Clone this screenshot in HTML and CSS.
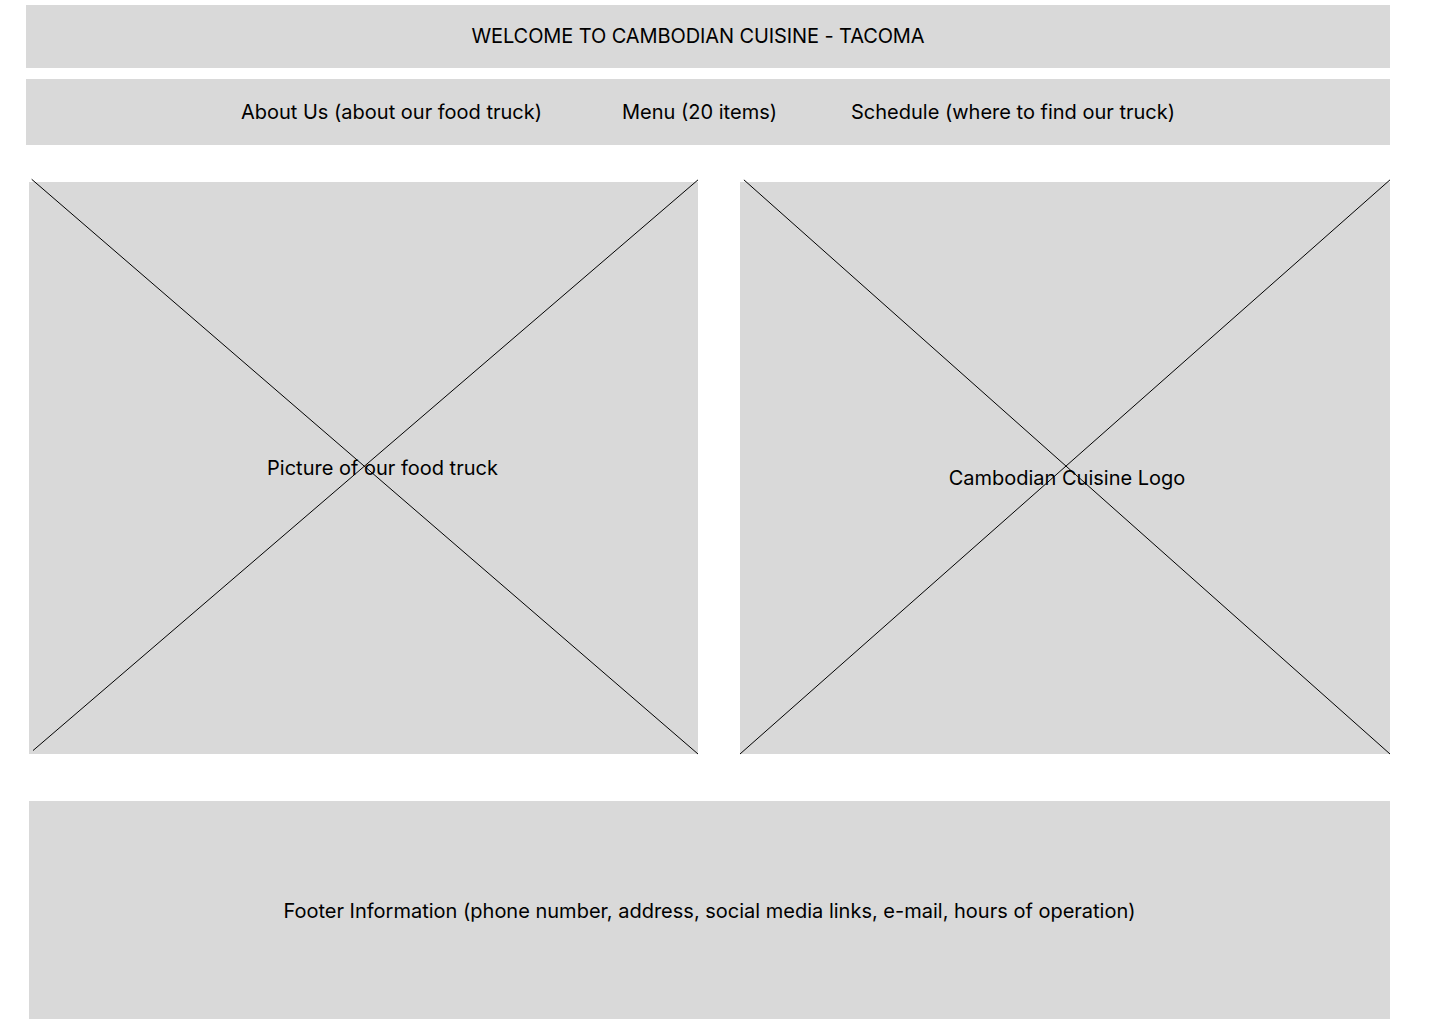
FILE: index.html
```html
<!DOCTYPE html>
<html>
<head>
  <meta charset=utf-8>
  <meta name="viewport" content="width=device-width, initial-scale=1">
  <title>Cambodian Cuisine - Tacoma</title>
<link rel="stylesheet" href="styles.css">
</head>
<body>

<div class=page>
  <header class=welcome>WELCOME TO CAMBODIAN CUISINE - TACOMA</header>

  <nav class=navBar>
    <a class=navItem>About Us (about our food truck)</a>
    <a class='navItem menuItem'>Menu (20 items)</a>
    <a class=navItem>Schedule (where to find our truck)</a>
  </nav>

  <div class=gridBox>
    <div class='placeholder truckPic'>
      <svg class=cross viewBox="0 0 100 100" preserveAspectRatio=none>
        <line x1=0.4 y1=-0.3 x2=100 y2=100 />
        <line x1=0.6 y1=99.4 x2=100 y2=-0.2 />
      </svg>
      <span class=caption>Picture of our food truck</span>
    </div>
    <div class='placeholder logoPic'>
      <svg class=cross viewBox="0 0 100 100" preserveAspectRatio=none>
        <line x1=0.6 y1=-0.2 x2=100 y2=100 />
        <line x1=0 y1=100 x2=100 y2=-0.2 />
      </svg>
      <span class=caption>Cambodian Cuisine Logo</span>
    </div>
  </div>

  <footer class=footer>Footer Information (phone number, address, social media links, e-mail, hours of operation)</footer>
</div>

</body>
</html>
```

FILE: styles.css
```css
* {
  box-sizing: border-box;
  }
html, body {
  margin: 0;
  padding: 0;
  background: #fff;
  }
body {
  font: normal 20px "Inter", "Liberation Sans", sans-serif;
  color: #000;
  }
.page {
  width: 1390px;
  padding: 5px 0 0 26px;
  }
.welcome {
  display: flex;
  align-items: center;
  justify-content: center;
  height: 63px;
  padding: 0 20px 2px 0;
  letter-spacing: -0.1px;
  background: #d9d9d9;
  }
.navBar {
  display: flex;
  align-items: center;
  justify-content: center;
  height: 66px;
  margin-top: 11px;
  background: #d9d9d9;
  }
.navItem {
  margin-right: 80px;
  }
.menuItem {
  margin-right: 74px;
  }
.navItem:last-child {
  margin-right: 0;
  }
.gridBox {
  display: grid;
  grid-template-columns: 669px 650px;
  gap: 42px;
  margin: 37px 0 0 3px;
  }
.placeholder {
  position: relative;
  height: 572px;
  display: flex;
  align-items: center;
  justify-content: center;
  background: #d9d9d9;
  }
.cross {
  position: absolute;
  top: -1px;
  left: 0;
  width: 100%;
  height: 573px;
  overflow: visible;
  }
.cross line {
  stroke: #000;
  stroke-width: 1px;
  vector-effect: non-scaling-stroke;
  }
.caption {
  position: relative;
  }
.truckPic .caption {
  left: 19px;
  top: 0;
  }
.logoPic .caption {
  left: 2px;
  top: 10px;
  }
.footer {
  display: flex;
  align-items: center;
  justify-content: center;
  height: 218px;
  margin: 47px 0 0 3px;
  padding-top: 2px;
  background: #d9d9d9;
  }
```
